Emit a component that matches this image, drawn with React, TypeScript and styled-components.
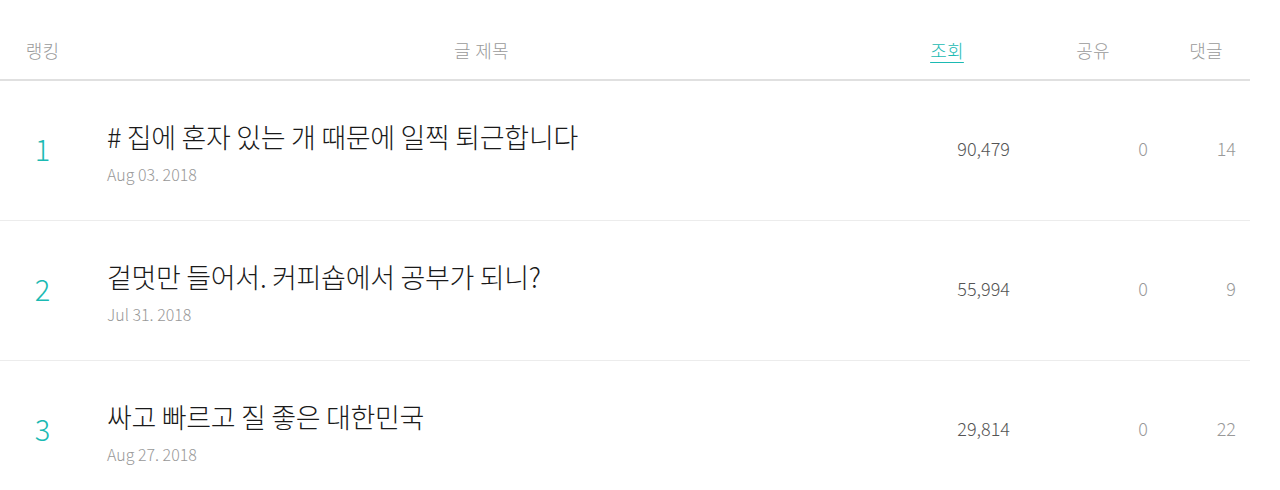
import React from "react";
import styled, { createGlobalStyle } from "styled-components";

const posts = [
  { rank: 1, title: "# 집에 혼자 있는 개 때문에 일찍 퇴근합니다", date: "Aug 03. 2018", views: "90,479", shares: 0, comments: 14 },
  { rank: 2, title: "겉멋만 들어서. 커피숍에서 공부가 되니?", date: "Jul 31. 2018", views: "55,994", shares: 0, comments: 9 },
  { rank: 3, title: "싸고 빠르고 질 좋은 대한민국", date: "Aug 27. 2018", views: "29,814", shares: 0, comments: 22 },
];

const App = () => {
  return (
    <>
      <GlobalStyle />
      <Table>
        <HeadRow>
          <HeadCell>랭킹</HeadCell>
          <HeadCell>글 제목</HeadCell>
          <HeadCell $active>조회</HeadCell>
          <HeadCell>공유</HeadCell>
          <HeadCell>댓글</HeadCell>
        </HeadRow>
        {posts.map((post) => (
          <Row key={post.rank}>
            <Rank>{post.rank}</Rank>
            <TitleCell>
              <Title>{post.title}</Title>
              <PostDate>{post.date}</PostDate>
            </TitleCell>
            <Count $strong>{post.views}</Count>
            <Count>{post.shares}</Count>
            <Count>{post.comments}</Count>
          </Row>
        ))}
      </Table>
    </>
  );
};

export default App;

const GlobalStyle = createGlobalStyle`
  body {
    margin: 0;
    background: #fff;
    font-family: "Noto Sans CJK KR", "Noto Sans", sans-serif;
    font-weight: 300;
  }
`;

const Table = styled.div`
  width: 1250px;
`;

const grid = `
  display: grid;
  grid-template-columns: 79px 1fr 126px 110px 60px;
  column-gap: 28px;
  padding-right: 14px;
  box-sizing: border-box;
`;

const HeadRow = styled.div`
  ${grid}
  height: 81px;
  align-items: end;
  padding-bottom: 16px;
  border-bottom: 2px solid #e0e0e0;
`;

const HeadCell = styled.div<{ $active?: boolean }>`
  text-align: center;
  font-size: 18px;
  line-height: 26px;
  letter-spacing: 0.3px;
  color: ${(p) => (p.$active ? "#1bbab3" : "#9a9a9a")};
  text-decoration: ${(p) => (p.$active ? "underline" : "none")};
  text-underline-offset: 4px;

  &:first-child {
    padding-left: 6px;
  }
`;

const Row = styled.div`
  ${grid}
  height: 140px;
  padding-bottom: 5px;
  align-items: center;
  border-bottom: 1px solid #ececec;
`;

const Rank = styled.div`
  text-align: center;
  padding-left: 6px;
  font-size: 29px;
  color: #1bbab3;
`;

const TitleCell = styled.div`
  display: flex;
  flex-direction: column;
  margin-top: 8px;
`;

const Title = styled.div`
  font-size: 27px;
  line-height: 36px;
  color: #1a1a1a;
  letter-spacing: -0.3px;
`;

const PostDate = styled.div`
  margin-top: 8px;
  font-size: 16px;
  line-height: 22px;
  color: #999;
`;

const Count = styled.div<{ $strong?: boolean }>`
  text-align: right;
  font-size: 18px;
  color: ${(p) => (p.$strong ? "#555" : "#999")};
`;
